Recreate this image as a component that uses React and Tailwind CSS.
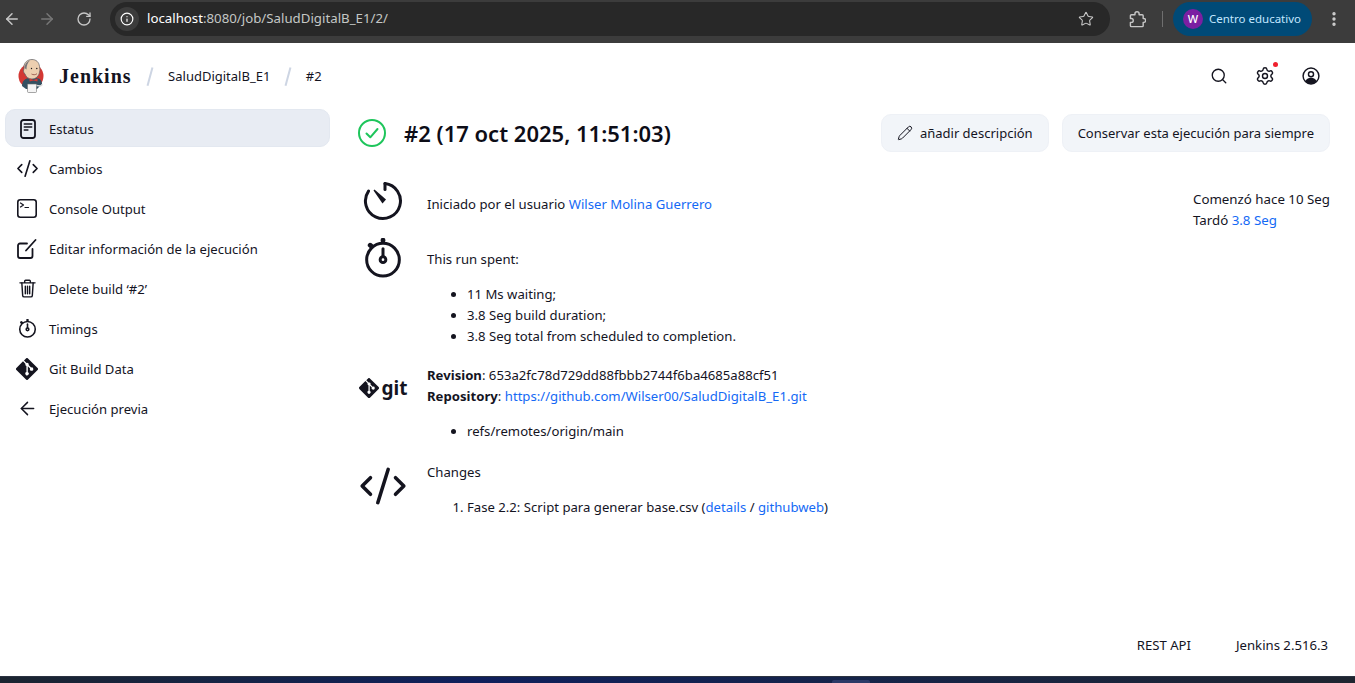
import React from 'react';
import {
  ArrowLeft,
  ArrowRight,
  RotateCw,
  Info,
  Star,
  EllipsisVertical,
  Search,
  Settings,
  CodeXml,
  Pencil,
} from 'lucide-react';

const FONT = 'font-["Noto_Sans","Open_Sans",sans-serif]';

// Git logo diamond
const GitDiamond = ({ className }) => (
  <svg viewBox="0 0 24 24" className={className}>
    <path
      fill="currentColor"
      d="M23.55 10.93 13.07.45a1.55 1.55 0 0 0-2.18 0L8.71 2.62l2.76 2.76a1.83 1.83 0 0 1 2.33 2.33l2.66 2.66a1.83 1.83 0 1 1-1.1 1.03l-2.48-2.48v6.53a1.83 1.83 0 1 1-1.5-.05V8.81a1.83 1.83 0 0 1-1-2.4L7.66 3.68.45 10.89a1.55 1.55 0 0 0 0 2.18l10.48 10.48a1.55 1.55 0 0 0 2.18 0l10.44-10.44a1.55 1.55 0 0 0 0-2.18z"
    />
  </svg>
);

const Stopwatch = ({ className, stroke = 2 }) => (
  <svg viewBox="0 0 24 24" fill="none" stroke="currentColor" strokeWidth={stroke} strokeLinecap="round" className={className}>
    <circle cx="12" cy="13" r="9.800" />
    <path d="M12 1.300v.4M4.300 4.300l.5.4" strokeWidth={stroke * 1.6} />
    <path d="M12 6.500v4.500" />
    <circle cx="12" cy="13" r="1.700" />
  </svg>
);

const Clock = ({ className }) => (
  <svg viewBox="0 0 40 40" fill="none" stroke="currentColor" strokeLinecap="round" className={className}>
    <path d="M22 2.600a17.500 17.500 0 1 1-16.500 7.500" strokeWidth="3" />
    <path d="M22 2.600v6" strokeWidth="3" />
    <path d="M10.500 9.500l1-1 11.500 10-3.500 4z" fill="currentColor" stroke="none" />
  </svg>
);

const JenkinsLogo = () => (
  <svg viewBox="0 0 26 34" className="w-[26px] h-[34px] shrink-0">
    <circle cx="13" cy="17" r="12.500" fill="#d33833" />
    <path d="M4 27c0-5 3-8 8-8h6c4 0 6 3 6 6l-5 5H8z" fill="#335061" />
    <path d="M6 8C6 3 10 .5 14 .5s7 2.500 7.500 7c.5 2 .5 4 0 5.500-.5 4-3.500 7-7.500 7-3.500 0-6-2-7-5-1.500-1-2-4-1-5 0-1 0-1.500 0-2z" fill="#eccfb0" stroke="#5b5f66" strokeWidth="0.700" />
    <path d="M6.500 9C7 4 10 2 12 1.500 9.500 3.500 8.500 7 8.500 10.500z" fill="#77767a" />
    <circle cx="13.500" cy="9.500" r="0.700" fill="#1a1a1a" />
    <circle cx="18.800" cy="9.500" r="0.700" fill="#1a1a1a" />
    <path d="M13.500 15c1.500 1 4 1 5.500-.3" stroke="#8f4a3f" strokeWidth="0.800" fill="none" />
    <path d="M11.500 19.500l4 1.500 4-1.500v3l-4-1-4 1z" fill="#d33833" />
    <path d="M9.500 25h9v7.500a1 1 0 0 1-1 1h-7a1 1 0 0 1-1-1z" fill="#f4f4f4" stroke="#6b6b6b" strokeWidth="0.600" />
    <path d="M18.500 26.500l4 .5 2-1.500" stroke="#d9d9d9" strokeWidth="1.400" fill="none" />
  </svg>
);

const CheckCircle = () => (
  <svg viewBox="0 0 28 28" fill="none" stroke="#1ec55b" strokeLinecap="round" strokeLinejoin="round" className="w-7 h-7 shrink-0">
    <circle cx="14" cy="14" r="13" strokeWidth="2" />
    <path d="M8.500 14.500l3.800 3.800 7.200-8.300" strokeWidth="2" />
  </svg>
);

const UserCircle = () => (
  <svg viewBox="0 0 20 20" className="w-[18px] h-[18px]" fill="none" stroke="currentColor">
    <circle cx="10" cy="10" r="8.800" strokeWidth="1.600" />
    <circle cx="10" cy="8" r="2.800" strokeWidth="1.600" />
    <path d="M3.800 15.500c1.500-2.500 3.500-3.500 6.200-3.500s4.700 1 6.200 3.500c-1.500 2-3.700 3.200-6.200 3.200s-4.700-1.200-6.200-3.200z" fill="currentColor" stroke="none" />
  </svg>
);

const DocIcon = () => (
  <svg viewBox="0 0 16 20" fill="none" stroke="currentColor" strokeWidth="1.800" strokeLinecap="round" className="w-[16px] h-[20px]">
    <rect x="1" y="1" width="14" height="18" rx="2.500" />
    <path d="M4.300 5h7.400M4.300 8h7.400M4.300 11h3.600" strokeWidth="1.500" />
  </svg>
);

const TerminalIcon = () => (
  <svg viewBox="0 0 20 19" fill="none" stroke="currentColor" strokeWidth="1.600" strokeLinecap="round" strokeLinejoin="round" className="w-[20px] h-[19px]">
    <rect x="0.800" y="0.800" width="18.400" height="17.400" rx="2.500" />
    <path d="M3.500 4l3 2-3 2M8 8.500h3.500" strokeWidth="1.200" />
  </svg>
);

const EditIcon = () => (
  <svg viewBox="0 0 20 20" fill="none" stroke="currentColor" strokeWidth="1.800" strokeLinecap="round" className="w-[20px] h-[20px]">
    <path d="M10 4.500H3a2 2 0 0 0-2 2V17a2 2 0 0 0 2 2h10.500a2 2 0 0 0 2-2v-7" />
    <path d="M9 11.500L18.500 1" />
  </svg>
);

const TrashIcon = () => (
  <svg viewBox="0 0 18 20" fill="none" stroke="currentColor" strokeWidth="1.500" strokeLinecap="round" strokeLinejoin="round" className="w-[17px] h-[19px]">
    <path d="M1 4h16M6 4V2.300a1 1 0 0 1 1-1h4a1 1 0 0 1 1 1V4" />
    <path d="M3 4l.9 13.500a1.500 1.500 0 0 0 1.500 1.400h7.200a1.500 1.500 0 0 0 1.500-1.400L15 4" />
    <path d="M6.700 7.500v8M9 7.500v8M11.300 7.500v8" />
  </svg>
);

const ExtensionIcon = () => (
  <svg viewBox="0 0 18 18" fill="none" stroke="currentColor" strokeWidth="1.500" strokeLinejoin="round" className="w-[17px] h-[17px] ml-[19px] shrink-0">
    <path d="M2.500 4h3.800V3a2.200 2.200 0 0 1 4.400 0v1h3.300a1 1 0 0 1 1 1v3h.6a2 2 0 0 1 0 4H15v3.500a1 1 0 0 1-1 1H2.500a1 1 0 0 1-1-1V12h1a2 2 0 0 0 0-4h-1V5a1 1 0 0 1 1-1z" />
  </svg>
);

const sideItems = [
  { label: 'Estatus', icon: <DocIcon />, active: true },
  { label: 'Cambios', icon: <CodeXml className="w-[23px] h-[23px]" strokeWidth={1.700} /> },
  { label: 'Console Output', icon: <TerminalIcon /> },
  { label: 'Editar información de la ejecución', icon: <EditIcon /> },
  { label: "Delete build ‘#2’", icon: <TrashIcon /> },
  { label: 'Timings', icon: <Stopwatch className="w-[19px] h-[19px]" stroke={2} /> },
  { label: 'Git Build Data', icon: <GitDiamond className="w-[22px] h-[22px]" /> },
  { label: 'Ejecución previa', icon: <ArrowLeft className="w-[21px] h-[21px]" strokeWidth={1.700} /> },
];

const BrowserBar = () => (
  <div className="h-[43px] pb-[5px] bg-[#3c3c3c] flex items-center shrink-0 text-[#c7c7c7]">
    <div className="flex items-center w-[110px] pl-[3px]">
      <ArrowLeft className="w-[18px] h-[18px]" strokeWidth={2} />
      <ArrowRight className="w-[18px] h-[18px] ml-[17px] text-[#777]" strokeWidth={2} />
      <RotateCw className="w-[16px] h-[16px] ml-[20px]" strokeWidth={2} />
    </div>
    <div className="w-[1000px] h-[34px] rounded-full bg-[#282828] flex items-center pl-[5px] pr-[16px]">
      <span className="w-[24px] h-[24px] rounded-full bg-[#3c3c3c] flex items-center justify-center">
        <Info className="w-[14px] h-[14px] text-white" strokeWidth={2} />
      </span>
      <span className="ml-[8px] text-[13.250px] text-[#c4c7c5] whitespace-nowrap">
        <span className="text-white">localhost</span>:8080/job/SaludDigitalB_E1/2/
      </span>
      <Star className="ml-auto w-[16px] h-[16px]" strokeWidth={1.600} />
    </div>
    <ExtensionIcon />
    <span className="ml-[16px] w-px h-[16px] bg-[#6f6f6f]" />
    <div className="ml-[10px] h-[34px] w-[139px] rounded-full bg-[#004a77] flex items-center pl-[10px]">
      <span className="w-[20px] h-[20px] rounded-full bg-[#7b1fa2] text-white text-[11px] font-medium flex items-center justify-center">W</span>
      <span className="ml-[6px] text-[11.500px] text-[#c2e7ff] whitespace-nowrap">Centro educativo</span>
    </div>
    <EllipsisVertical className="ml-[13px] w-[18px] h-[18px] text-[#d0d0d0]" strokeWidth={2.500} />
  </div>
);

const Slash = () => <span className="ml-[17px] w-[1.500px] h-[19px] rotate-[15deg] bg-[#cdd5e3]" />;

const Header = () => (
  <div className="h-[66px] flex items-center pl-[18px] pr-[35px] shrink-0">
    <JenkinsLogo />
    <span className="ml-[15px] font-['Liberation_Serif',serif] font-bold text-[20px] tracking-[1px] text-[#14141f]">Jenkins</span>
    <Slash />
    <span className="ml-[18px] text-[13px] text-[#14141f] pt-[2px]">SaludDigitalB_E1</span>
    <Slash />
    <span className="ml-[17px] text-[13px] text-[#14141f] pt-[2px]">#2</span>
    <div className="ml-auto flex items-center gap-[27px] text-[#14141f]">
      <Search className="w-[18px] h-[18px]" strokeWidth={1.800} />
      <span className="relative">
        <Settings className="w-[20px] h-[20px]" strokeWidth={1.700} />
        <span className="absolute -top-[4px] -right-[3px] w-[5px] h-[5px] rounded-full bg-[#f0202e]" />
      </span>
      <UserCircle />
    </div>
  </div>
);

const Sidebar = () => (
  <div className="w-[325px] ml-[5px] shrink-0 flex flex-col">
    {sideItems.map((item) => (
      <div
        key={item.label}
        className={`h-[38px] mb-[2px] flex items-center rounded-[10px] text-[13.100px] text-[#14141f] ${item.active ? 'bg-[#e8ecf3] border border-[#e3e8f0]' : ''}`}
      >
        <span className={`flex justify-center shrink-0 pt-[1px] ${item.active ? 'w-[43px]' : 'w-[44px]'}`}>{item.icon}</span>
        <span className="whitespace-nowrap pt-[3px]">{item.label}</span>
      </div>
    ))}
  </div>
);

const Link = ({ children }) => <span className="text-[#1469f5]">{children}</span>;

const Row = ({ icon, children, className = '' }) => (
  <div className={`flex ${className}`}>
    <div className="w-[50px] shrink-0 flex justify-center items-start">{icon}</div>
    <div className="ml-[19px] flex-1">{children}</div>
  </div>
);

const Main = () => (
  <div className="flex-1 pl-[28px] pr-[25px] pt-[5px] text-[13.150px] text-[#14141f] leading-[21px]">
    <div className="flex items-center h-[38px] mb-[22px]">
      <CheckCircle />
      <h1 className="ml-[18px] text-[22px] font-semibold text-[#0d0d17]">#2 (17 oct 2025, 11:51:03)</h1>
      <div className="ml-auto flex gap-[13px] text-[13px]">
        <button className="h-[38px] px-[15px] flex items-center gap-[7px] rounded-[10px] bg-[#f2f5f9] border border-[#eef1f6]">
          <Pencil className="w-[16px] h-[16px]" strokeWidth={1.500} />
          añadir descripción
        </button>
        <button className="h-[38px] px-[15px] rounded-[10px] bg-[#f2f5f9] border border-[#eef1f6]">
          Conservar esta ejecución para siempre
        </button>
      </div>
    </div>
    <div className="relative">
      <div className="absolute right-0 top-[15px] text-[13.300px]">
        <div>Comenzó hace 10 Seg</div>
        <div>Tardó <Link>3.8 Seg</Link></div>
      </div>
      <Row className="h-[59px]" icon={<Clock className="w-[40px] h-[40px] mt-[7px]" />}>
        <div className="pt-[20px]">Iniciado por el usuario <Link>Wilser Molina Guerrero</Link></div>
      </Row>
      <Row className="mb-[18px]" icon={<Stopwatch className="w-[40px] h-[40px] mt-[5px]" stroke={1.800} />}>
        <div className="pt-[16px]">This run spent:</div>
        <ul className="list-disc pl-[40px] mt-[14px]">
          <li>11 Ms waiting;</li>
          <li>3.8 Seg build duration;</li>
          <li>3.8 Seg total from scheduled to completion.</li>
        </ul>
      </Row>
      <Row
        className="mb-[20px]"
        icon={
          <div className="flex items-center h-[24px] mt-[11px] text-[#14141f]">
            <GitDiamond className="w-[20px] h-[20px]" />
            <span className="ml-[3px] font-bold text-[19px] leading-[24px]">git</span>
          </div>
        }
      >
        <div><b className="font-bold">Revision</b>: 653a2fc78d729dd88fbbb2744f6ba4685a88cf51</div>
        <div><b className="font-bold">Repository</b>: <Link>https://github.com/Wilser00/SaludDigitalB_E1.git</Link></div>
        <ul className="list-disc pl-[40px] mt-[14px]">
          <li>refs/remotes/origin/main</li>
        </ul>
      </Row>
      <Row icon={<CodeXml className="w-[50px] h-[50px] -mt-[1px]" strokeWidth={1.700} />}>
        <div>Changes</div>
        <ol className="list-decimal pl-[40px] mt-[14px]">
          <li>Fase 2.2: Script para generar base.csv (<Link>details</Link> / <Link>githubweb</Link>)</li>
        </ol>
      </Row>
    </div>
  </div>
);

export default function App() {
  return (
    <div className={`h-[683px] w-[1355px] overflow-hidden flex flex-col bg-white ${FONT}`}>
      <BrowserBar />
      <Header />
      <div className="flex flex-1 min-h-0">
        <Sidebar />
        <Main />
      </div>
      <div className="h-[66px] shrink-0 flex justify-end items-start gap-[45px] pr-[27px] pt-[26px] text-[13.150px] text-[#14141f]">
        <span>REST API</span>
        <span>Jenkins 2.516.3</span>
      </div>
      <div className="relative h-[7px] shrink-0 bg-gradient-to-r from-[#1b2430] via-[#0f1f5c] via-35% to-[#1e2530] border-t border-[#2b3240]">
        <span className="absolute left-[832px] bottom-0 w-[38px] h-[3px] rounded-t-[2px] bg-[#2c3a68]" />
      </div>
    </div>
  );
}
